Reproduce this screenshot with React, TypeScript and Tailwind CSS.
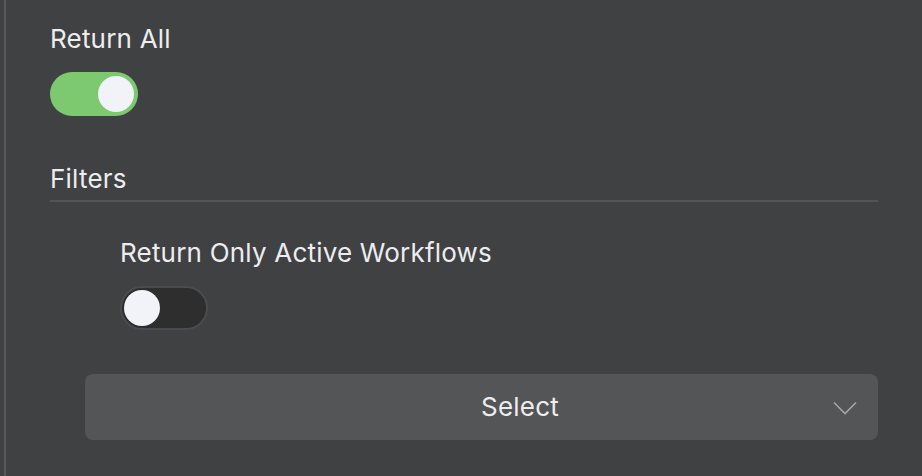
import { useState } from "react";

function Toggle({ on, onChange }: { on: boolean; onChange: (v: boolean) => void }) {
  return (
    <button
      onClick={() => onChange(!on)}
      className={
        on
          ? "flex items-center justify-end w-[88px] h-[44px] rounded-full bg-[#7cc96f] px-[4px]"
          : "flex items-center justify-start w-[88px] h-[44px] rounded-full bg-[#2e2e2f] border-2 border-[#4b4c4e] px-[2px]"
      }
    >
      <span className="block w-[36px] h-[36px] rounded-full bg-[#f2f3f9]" />
    </button>
  );
}

export default function App() {
  const [returnAll, setReturnAll] = useState(true);
  const [activeOnly, setActiveOnly] = useState(false);

  return (
    <div
      className="flex h-[476px] w-full bg-[#404143] text-[#ededef] text-[26px] leading-[36px] tracking-[0.2px]"
      style={{ fontFamily: "Inter, 'Noto Sans', sans-serif" }}
    >
      <div className="ml-[4px] w-[2px] bg-[#58595c]" />

      <div className="flex-1 pl-[44px] pr-[44px] pt-[21px]">
        {/* Return All */}
        <div>Return All</div>
        <div className="mt-[15px]">
          <Toggle on={returnAll} onChange={setReturnAll} />
        </div>

        {/* Filters */}
        <div className="mt-[45px]">Filters</div>
        <div className="mt-[3px] h-[2px] bg-[#535456]" />

        <div className="pl-[70px] pt-[33px]">
          <div>Return Only Active Workflows</div>
          <div className="mt-[15px]">
            <Toggle on={activeOnly} onChange={setActiveOnly} />
          </div>
        </div>

        <div className="mt-[44px] ml-[35px]">
          <button className="relative flex items-center justify-center w-full h-[66px] rounded-[8px] bg-[#545557] pl-[77px]">
            <span>Select</span>
            <svg
              className="absolute right-[21px] top-[27px]"
              width="24"
              height="14"
              viewBox="0 0 24 14"
              fill="none"
              stroke="#a3a4ad"
              strokeWidth="1.6"
            >
              <path d="M1 1.5 L12 12.5 L23 1.5" />
            </svg>
          </button>
        </div>
      </div>
    </div>
  );
}
